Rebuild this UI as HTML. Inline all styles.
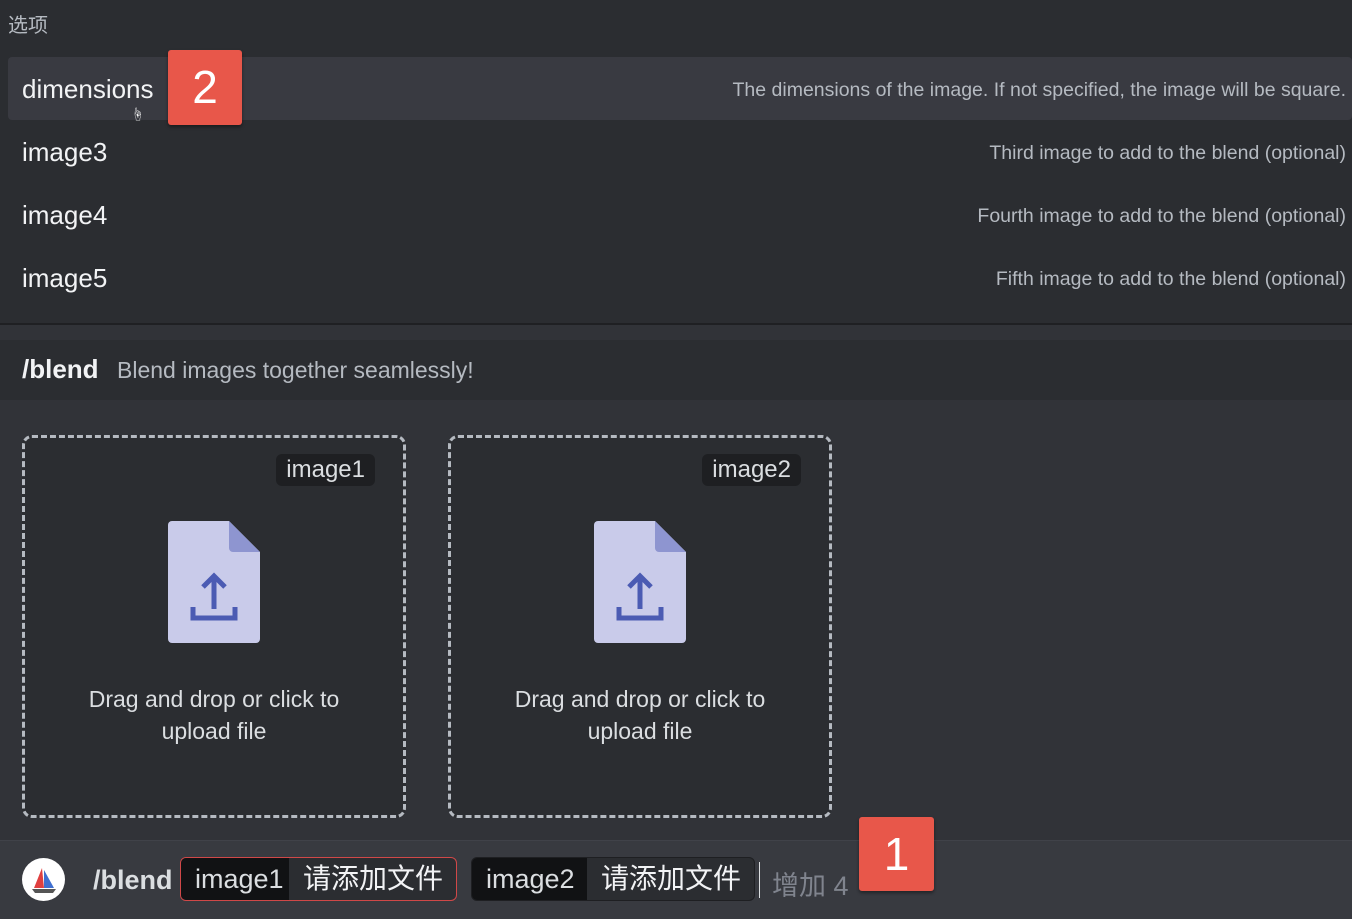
<!DOCTYPE html>
<html><head><meta charset="utf-8"><style>
*{margin:0;padding:0;box-sizing:border-box}
body{width:1352px;height:919px;overflow:hidden;background:#313338;font-family:"Liberation Sans","Noto Sans CJK SC",sans-serif;color:#dbdee1;position:relative}
.abs{position:absolute}
.top{left:0;top:0;width:1352px;height:325px;background:#2b2d31}
.row{position:absolute;left:8px;width:1344px;height:63px;border-radius:4px}
.row .n{position:absolute;left:14px;top:17px;font-size:26px;color:#f2f3f5}
.row .d{position:absolute;right:6px;top:22px;font-size:19.5px;color:#b5bac1}
.badge{background:#e8574a;color:#fff;font-size:46px;text-align:center;border-radius:3px;box-shadow:0 2px 3px rgba(0,0,0,.4)}
.box{width:384px;height:383px;border:3px dashed #b5bac1;border-radius:10px;background:#2b2d31}
.tag{position:absolute;top:16px;background:#1e1f22;border-radius:6px;font-size:24px;color:#dbdee1;padding:2px 10px}
.file{position:absolute;left:143px;top:83px}
.cap{position:absolute;left:0;width:100%;top:245px;text-align:center;font-size:23px;line-height:32px;color:#dbdee1}
.pill{position:absolute;top:857px;height:44px;border-radius:6px;display:flex;overflow:hidden;font-size:27px}
.pill span{display:block;line-height:42px}
</style></head><body>
<div class="abs top"></div>
<div class="abs" style="left:8px;top:9px;font-size:20px;color:#b5bac1">选项</div>
<div class="row" style="top:57px;background:#393a41"><div class="n">dimensions</div><div class="d">The dimensions of the image. If not specified, the image will be square.</div></div>
<div class="abs" style="left:131px;top:104px;font-size:13px;color:#fff">☝</div>
<div class="abs badge" style="left:168px;top:50px;width:74px;height:75px;line-height:75px">2</div>
<div class="row" style="top:120px"><div class="n">image3</div><div class="d">Third image to add to the blend (optional)</div></div>
<div class="row" style="top:183px"><div class="n">image4</div><div class="d">Fourth image to add to the blend (optional)</div></div>
<div class="row" style="top:246px"><div class="n">image5</div><div class="d">Fifth image to add to the blend (optional)</div></div>
<div class="abs" style="left:0;top:323px;width:1352px;height:2px;background:#1f2023"></div>
<div class="abs" style="left:0;top:340px;width:1352px;height:60px;background:#2b2d31"></div>
<div class="abs" style="left:22px;top:354px;font-size:26px;font-weight:bold;color:#f2f3f5">/blend</div>
<div class="abs" style="left:117px;top:357px;font-size:23px;color:#b5bac1">Blend images together seamlessly!</div>

<div class="abs box" style="left:22px;top:435px">
<div class="tag" style="right:28px">image1</div>
<svg class="file" width="92" height="122" viewBox="0 0 92 122"><path d="M4 0H61L92 31V118a4 4 0 0 1-4 4H4a4 4 0 0 1-4-4V4a4 4 0 0 1 4-4z" fill="#c9cbea"/><path d="M61 0L92 31H65a4 4 0 0 1-4-4z" fill="#8e95d0"/><path d="M46 88V56M35 66L46 55L57 66M25 86V97H67V86" stroke="#4b5bb3" stroke-width="5" fill="none"/></svg>
<div class="cap">Drag and drop or click to<br>upload file</div>
</div>
<div class="abs box" style="left:448px;top:435px">
<div class="tag" style="right:28px">image2</div>
<svg class="file" width="92" height="122" viewBox="0 0 92 122"><path d="M4 0H61L92 31V118a4 4 0 0 1-4 4H4a4 4 0 0 1-4-4V4a4 4 0 0 1 4-4z" fill="#c9cbea"/><path d="M61 0L92 31H65a4 4 0 0 1-4-4z" fill="#8e95d0"/><path d="M46 88V56M35 66L46 55L57 66M25 86V97H67V86" stroke="#4b5bb3" stroke-width="5" fill="none"/></svg>
<div class="cap">Drag and drop or click to<br>upload file</div>
</div>

<div class="abs" style="left:0;top:840px;width:1352px;height:79px;background:#383a40;border-top:1px solid #404249"></div>
<div class="abs" style="left:22px;top:858px;width:43px;height:43px;border-radius:50%;background:#fff"></div>
<svg class="abs" style="left:28px;top:864px" width="32" height="32" viewBox="0 0 32 32"><path d="M14 4L6 24H16z" fill="#e04040"/><path d="M16 6L26 24H16z" fill="#4070d0"/><path d="M4 25H28L25 29H7z" fill="#555"/></svg>
<div class="abs" style="left:93px;top:865px;font-size:27px;font-weight:bold;color:#dbdee1">/blend</div>
<div class="pill" style="left:180px;width:277px;border:1px solid #d04848;background:#2b2d31"><span style="background:#111214;width:108px;padding-left:14px">image1</span><span style="padding:0 10px 0 14px;color:#f2f3f5;font-size:28px">请添加文件</span></div>
<div class="pill" style="left:471px;width:284px;background:#2b2d31;border:1px solid #1e1f22"><span style="background:#111214;width:115px;padding-left:14px">image2</span><span style="padding:0 10px 0 14px;color:#f2f3f5;font-size:28px">请添加文件</span></div>
<div class="abs" style="left:759px;top:862px;width:1px;height:36px;background:#dbdee1"></div>
<div class="abs" style="left:772px;top:864px;font-size:27px;color:#80848e">增加 4</div>
<div class="abs badge" style="left:859px;top:817px;width:75px;height:74px;line-height:74px">1</div>
</body></html>
